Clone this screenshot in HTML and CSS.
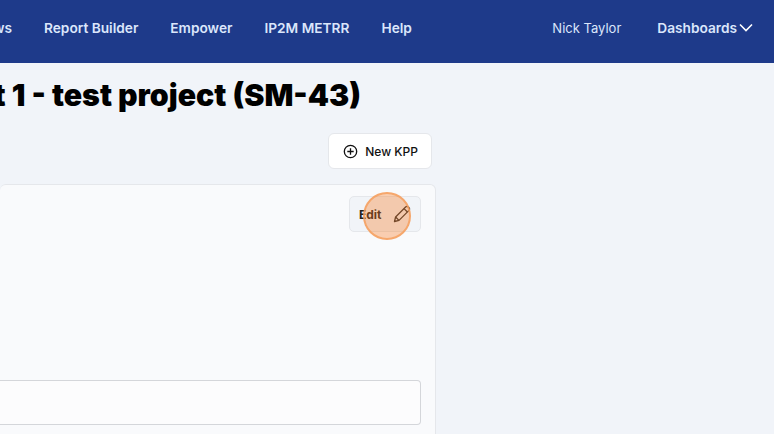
FILE: index.html
```html
<!DOCTYPE html>
<html lang="en">
<head>
<meta charset="utf-8">
<title>KPP</title>
<link rel="stylesheet" href="styles.css">
</head>
<body>
<header class="topbar">
  <nav class="nav-main">
    <a class="nav-link nav-clipped">Views</a>
    <a class="nav-link">Report Builder</a>
    <a class="nav-link">Empower</a>
    <a class="nav-link">IP2M METRR</a>
    <a class="nav-link">Help</a>
  </nav>
  <div class="nav-user">
    <span class="user-name">Nick Taylor</span>
    <a class="nav-link dash">Dashboards
      <svg class="chev" width="14" height="14" viewBox="0 0 14 14" fill="none" stroke="currentColor" stroke-width="1.6"><path d="M1 3.5 7 9.5 13 3.5"/></svg>
    </a>
  </div>
</header>
<main class="content">
  <h1 class="title">Project 1 - test project (SM-43)</h1>
  <div class="actions">
    <button class="btn-new">
      <svg width="15" height="15" viewBox="0 0 16 16" fill="none" stroke="#111" stroke-width="1.4"><circle cx="8" cy="8" r="6.6"/><path d="M8 4.6v6.8M4.6 8h6.8"/></svg>
      New KPP
    </button>
  </div>
  <section class="card">
    <div class="card-head">
      <button class="btn-edit">
        Edit
        <svg width="18" height="18" viewBox="0 0 18 18" fill="none" stroke="#333" stroke-width="1.3" stroke-linejoin="round"><path d="M1.5 16.5 2.6 12 12.6 2a1.9 1.9 0 0 1 2.7 0l.7.7a1.9 1.9 0 0 1 0 2.7L6 15.4Z"/><path d="M11 3.6 14.4 7M2.6 12 6 15.4"/></svg>
        <span class="spot"></span>
      </button>
    </div>
    <div class="field"></div>
  </section>
</main>
</body>
</html>
```
FILE: styles.css
```css
* { box-sizing: border-box; }
html, body { margin: 0; height: 100%; overflow: hidden; }
body {
  background: #f1f4f9;
  font-family: Inter, "Noto Sans", sans-serif;
  color: #000;
}
.topbar {
  height: 63px;
  background: #1e3a8a;
  display: flex;
  justify-content: space-between;
  align-items: center;
  padding-bottom: 8px;
  padding-right: 21px;
  color: #dbe6fb;
}
.nav-main { display: flex; gap: 32px; margin-left: -16px; align-items: center; }
.nav-link { font-size: 13.7px; font-weight: 600; white-space: nowrap; }
.nav-clipped { width: 28px; direction: rtl; overflow: hidden; }
.nav-user { display: flex; gap: 36px; align-items: center; }
.user-name { font-size: 13px; font-weight: 400; }
.dash { display: flex; align-items: center; gap: 2px; }
.chev { color: #fff; }
.content { width: 436px; }
.title {
  margin: 14px 0 0 -103px;
  font-size: 30.3px;
  line-height: 36px;
  font-weight: 900;
  white-space: nowrap;
}
.actions { display: flex; justify-content: flex-end; margin-top: 20px; padding-right: 4px; }
.btn-new {
  height: 36px;
  padding: 0 13px 0 14px;
  display: flex;
  align-items: center;
  gap: 7px;
  background: #fff;
  border: 1px solid #e5e7eb;
  border-radius: 6px;
  font: 500 12px Inter, sans-serif;
  color: #111;
}
.card {
  margin-top: 15px;
  height: 260px;
  background: #f9fafc;
  border: 1px solid #e5e7eb;
  border-radius: 6px 6px 0 0;
  border-left: 0;
  padding: 11px 14px 0 0;
}
.card-head { display: flex; justify-content: flex-end; }
.btn-edit {
  position: relative;
  width: 72px;
  height: 36px;
  display: flex;
  align-items: center;
  justify-content: space-between;
  padding: 0 9px;
  background: #f1f4f8;
  border: 1px solid #e5e7eb;
  border-radius: 5px;
  font: 700 12px Inter, sans-serif;
  color: #222;
}
.spot {
  position: absolute;
  left: 13px;
  top: -5px;
  width: 48px;
  height: 48px;
  border-radius: 50%;
  background: rgba(249, 115, 22, 0.33);
  border: 2px solid rgba(245, 160, 95, 0.85);
}
.field {
  margin-top: 148px;
  height: 45px;
  background: #fcfcfd;
  border: 1px solid #d4d6da;
  border-left: 0;
  border-radius: 0 4px 4px 0;
}
```
